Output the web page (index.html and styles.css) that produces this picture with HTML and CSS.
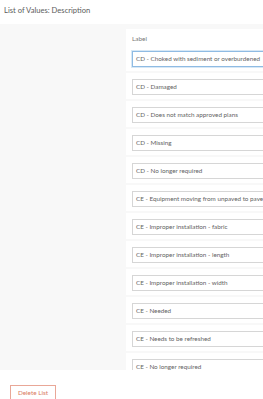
FILE: index.html
```html
<!DOCTYPE html>
<html lang="en">
<head>
    <meta charset="UTF-8">
    <meta name="viewport" content="width=device-width, initial-scale=1.0">
    <title>List of Values</title>
    <link rel="stylesheet" href="styles.css">
</head>
<body>
    <div class="page">
        <div class="header">List of Values: Description</div>
        <div class="content">
            <div class="list">
                <div class="row first">
                    <div class="label">Label</div>
                    <div class="field focused">CD - Choked with sediment or overburdened</div>
                </div>
                <div class="row"><div class="field">CD - Damaged</div></div>
                <div class="row"><div class="field">CD - Does not match approved plans</div></div>
                <div class="row"><div class="field">CD - Missing</div></div>
                <div class="row"><div class="field">CD - No longer required</div></div>
                <div class="row"><div class="field">CE - Equipment moving from unpaved to paved</div></div>
                <div class="row"><div class="field">CE - Improper installation - fabric</div></div>
                <div class="row"><div class="field">CE - Improper installation - length</div></div>
                <div class="row"><div class="field">CE - Improper installation - width</div></div>
                <div class="row"><div class="field">CE - Needed</div></div>
                <div class="row"><div class="field">CE - Needs to be refreshed</div></div>
                <div class="row"><div class="field">CE - No longer required</div></div>
            </div>
        </div>
        <div class="footer">
            <button class="delete-btn">Delete List</button>
        </div>
    </div>
</body>
</html>
```

FILE: styles.css
```css
html, body {
    margin: 0;
    padding: 0;
}

body {
    font-family: Lato, "Noto Sans", sans-serif;
    color: #4c4c4c;
    background: #fff;
}

.page {
    width: 263px;
    height: 399px;
    overflow: hidden;
    display: flex;
    flex-direction: column;
}

.header {
    height: 24px;
    flex: none;
    box-sizing: border-box;
    padding: 5px 0 0 4px;
    font-size: 7.6px;
    color: #5c5c5c;
}

.content {
    flex: 1;
    background: #f8f8f8;
    overflow: hidden;
    padding: 5px 0 0 126px;
}

.list {
    width: 220px;
    display: flex;
    flex-direction: column;
    gap: 2px;
}

.row {
    background: #fff;
    padding: 6px 0 4px 6px;
}

.label {
    font-size: 6.4px;
    color: #777;
    margin-bottom: 8px;
    line-height: 8px;
}

.field {
    height: 16px;
    box-sizing: border-box;
    border: 1px solid #d6d6d6;
    padding: 0 3px;
    font-size: 6.3px;
    line-height: 14px;
    white-space: nowrap;
    overflow: hidden;
    color: #636363;
}

.field.focused {
    border-color: #8fbbe3;
    box-shadow: 0 0 0 1px #d7e8f6;
}

.footer {
    height: 29px;
    flex: none;
    background: #fff;
    padding: 9px 0 0 10px;
    box-sizing: border-box;
}

.delete-btn {
    width: 46px;
    height: 16px;
    padding: 0;
    background: #fff;
    border: 1px solid #e9a797;
    color: #d97a63;
    font-family: Lato, "Noto Sans", sans-serif;
    font-size: 6.4px;
}
```
